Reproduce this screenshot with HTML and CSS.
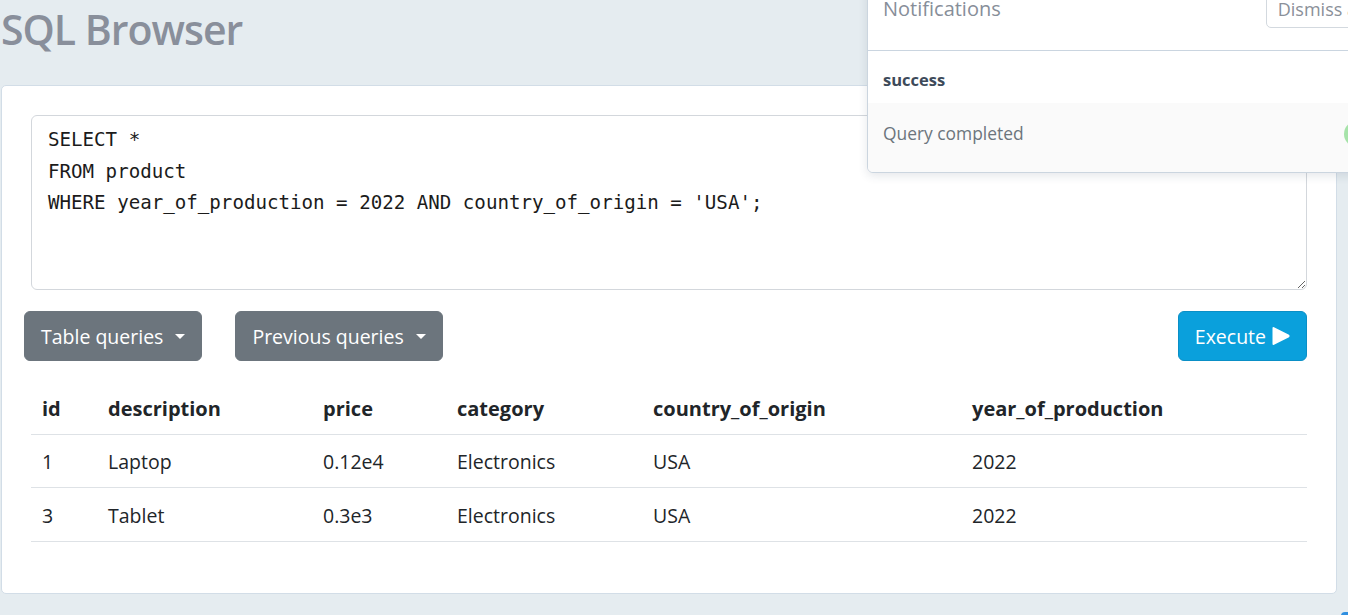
FILE: index.html
```html
<!DOCTYPE html>
<html lang="en">
<head>
<meta charset="utf-8">
<title>SQL Browser</title>
<link rel="stylesheet" href="styles.css">
</head>
<body>
<h1 class="title">SQL Browser</h1>
<main class="card">
  <textarea class="editor" spellcheck="false">SELECT *
FROM product
WHERE year_of_production = 2022 AND country_of_origin = 'USA';</textarea>
  <div class="toolbar">
    <button class="btn btn-secondary">Table queries <span class="caret"></span></button>
    <button class="btn btn-secondary">Previous queries <span class="caret"></span></button>
    <button class="btn btn-primary execute">Execute
      <svg class="play" viewBox="0 0 20 22" width="20" height="22"><path d="M3 2.2 Q1.5 1.4 1.5 3.2 V18.8 Q1.5 20.6 3 19.8 L18 12.2 Q19.4 11 18 9.8 Z" fill="#fff"/></svg>
    </button>
  </div>
  <table class="results">
    <thead>
      <tr>
        <th class="c-id">id</th>
        <th class="c-desc">description</th>
        <th class="c-price">price</th>
        <th class="c-cat">category</th>
        <th class="c-country">country_of_origin</th>
        <th>year_of_production</th>
      </tr>
    </thead>
    <tbody>
      <tr><td>1</td><td>Laptop</td><td>0.12e4</td><td>Electronics</td><td>USA</td><td>2022</td></tr>
      <tr><td>3</td><td>Tablet</td><td>0.3e3</td><td>Electronics</td><td>USA</td><td>2022</td></tr>
    </tbody>
  </table>
</main>

<aside class="notifications">
  <div class="notif-header">
    <span class="notif-title">Notifications</span>
    <button class="dismiss">Dismiss all</button>
  </div>
  <div class="notif-type">success</div>
  <div class="notif-body">
    <span>Query completed</span>
    <span class="status-dot"></span>
  </div>
</aside>
<span class="corner-badge"></span>
</body>
</html>
```

FILE: styles.css
```css
html, body {
  margin: 0;
  padding: 0;
}

body {
  background: #e5ecf0;
  font-family: "Open Sans", "Noto Sans", sans-serif;
  color: #212529;
  height: 615px;
  overflow: hidden;
  position: relative;
}

.title {
  margin: 4px 0 0 1px;
  font-size: 41px;
  line-height: 50px;
  font-weight: 600;
  letter-spacing: -1px;
  color: #898f9b;
}

.card {
  margin: 31px 0 0 1px;
  width: 1336px;
  box-sizing: border-box;
  padding: 29px;
  background: #fff;
  border: 1px solid #d2dde7;
  border-radius: 5px;
}

.editor {
  display: block;
  width: 100%;
  height: 175px;
  box-sizing: border-box;
  margin: 0;
  padding: 8px 16px;
  border: 1px solid #d3d7dc;
  border-radius: 6px;
  font-family: "DejaVu Sans Mono", "Liberation Mono", monospace;
  font-size: 19.15px;
  line-height: 31.5px;
  color: #1b1b1b;
  resize: vertical;
  outline: none;
}

.toolbar {
  display: flex;
  gap: 33px;
  margin: 21px 0 0 -7px;
}

.btn {
  display: inline-flex;
  align-items: center;
  height: 50px;
  box-sizing: border-box;
  padding: 0 16px 0 16px;
  border-radius: 6px;
  font-family: inherit;
  font-size: 19.5px;
  color: #fff;
  cursor: pointer;
}

.btn-secondary {
  background: #6c757d;
  border: 1px solid #6c757d;
}

.caret {
  display: inline-block;
  width: 0;
  height: 0;
  margin-left: 12px;
  border-top: 5px solid #fff;
  border-left: 5.5px solid transparent;
  border-right: 5.5px solid transparent;
}

.btn-primary {
  background: #0aa0dc;
  border: 1px solid #0a8fc6;
}

.execute {
  margin-left: auto;
  padding: 0 15px 0 16px;
}

.play {
  margin-left: 5px;
}

.results {
  width: 100%;
  margin: 20px 0 22px 0;
  border-collapse: collapse;
  font-size: 19.5px;
  line-height: 30px;
}

.results th,
.results td {
  text-align: left;
  padding: 12.5px 11px 10px 11px;
  border-bottom: 1px solid #dee2e6;
}

.results th {
  font-weight: 700;
  font-size: 20px;
  color: #212529;
  box-sizing: border-box;
}

.c-id { width: 66px; }
.c-desc { width: 215px; }
.c-price { width: 134px; }
.c-cat { width: 196px; }
.c-country { width: 319px; }

.notifications {
  position: absolute;
  top: -34px;
  left: 867px;
  width: 540px;
  background: #fff;
  border: 1px solid #cbd5df;
  border-radius: 6px;
  box-shadow: 0 3px 10px rgba(40, 60, 80, 0.12);
  overflow: hidden;
}

.notif-header {
  height: 84px;
  box-sizing: border-box;
  display: flex;
  align-items: center;
  padding: 0 16px 0 15px;
  border-bottom: 1px solid #cad5e0;
}

.notif-title {
  font-size: 20px;
  font-weight: 500;
  color: #878e99;
}

.dismiss {
  margin-left: 265px;
  height: 38px;
  padding: 0 11px;
  background: #fff;
  border: 1px solid #d3d9df;
  border-radius: 5px;
  font-family: inherit;
  font-size: 18px;
  color: #8a9099;
  white-space: nowrap;
}

.notif-type {
  height: 52px;
  box-sizing: border-box;
  display: flex;
  align-items: center;
  padding: 5px 0 0 15px;
  font-size: 16.5px;
  font-weight: 700;
  color: #3d4a5a;
  background: #fff;
}

.notif-body {
  height: 69px;
  box-sizing: border-box;
  display: flex;
  align-items: center;
  padding: 0 0 10px 15px;
  background: #fafafa;
  font-size: 17.4px;
  color: #6c757d;
  position: relative;
}

.status-dot {
  position: absolute;
  left: 476px;
  top: 18px;
  width: 26px;
  height: 26px;
  border-radius: 50%;
  background: #a6e3a9;
}

.corner-badge {
  position: absolute;
  left: 1341px;
  top: 612px;
  width: 14px;
  height: 8px;
  border-radius: 4px 4px 0 0;
  background: #2f8fe0;
}
```
